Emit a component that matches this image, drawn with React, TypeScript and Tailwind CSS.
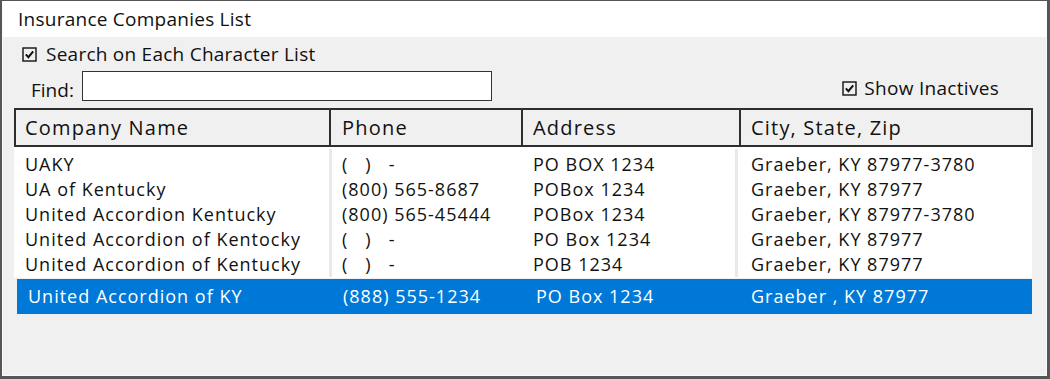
import React from 'react';

const rows = [
  ['UAKY', '(   )   -', 'PO BOX 1234', 'Graeber, KY 87977-3780'],
  ['UA of Kentucky', '(800) 565-8687', 'POBox 1234', 'Graeber, KY 87977'],
  ['United Accordion Kentucky', '(800) 565-45444', 'POBox 1234', 'Graeber, KY 87977-3780'],
  ['United Accordion of Kentocky', '(   )   -', 'PO Box 1234', 'Graeber, KY 87977'],
  ['United Accordion of Kentucky', '(   )   -', 'POB 1234', 'Graeber, KY 87977'],
];

function CheckBox() {
  return (
    <svg width="15" height="15" viewBox="0 0 15 15" className="shrink-0">
      <rect x="1" y="1" width="13" height="13" fill="none" stroke="#111" strokeWidth="1.4" />
      <path d="M3.8 7.4 L6.4 10.2 L11.2 4.3" fill="none" stroke="#111" strokeWidth="2" />
    </svg>
  );
}

export default function App() {
  return (
    <div
      className="w-[1050px] h-[379px] border-t border-l-2 border-r-[3px] border-b-[3px] border-[#565656] text-[#111]"
      style={{ fontFamily: '"Open Sans", "Noto Sans", sans-serif' }}
    >
      <div className="h-full flex flex-col border-l border-r border-b border-[#fafafa] bg-[#f0f0f0]">
        {/* title */}
        <div className="h-[36px] shrink-0 bg-white flex items-center pl-[15px] text-[19px] leading-[26px] tracking-[0.25px]">
          Insurance Companies List
        </div>

        <div className="flex flex-col pl-[11px] pr-[13px]">
          {/* search option */}
          <div className="mt-[4px] flex items-center pl-[8px] h-[26px] text-[19px] leading-[26px] tracking-[0.25px]">
            <CheckBox />
            <span className="ml-[9px]">Search on Each Character List</span>
          </div>

          {/* find row */}
          <div className="mt-[4px] flex items-start">
            <span className="mt-[6px] pl-[17px] text-[19px] leading-[26px]">Find:</span>
            <div className="ml-[8px] w-[410px] h-[30px] bg-white border border-[#333]" />
            <div className="ml-auto mr-[34px] mt-[4px] flex items-center h-[26px] text-[19px] leading-[26px] tracking-[0.3px]">
              <CheckBox />
              <span className="ml-[7px]">Show Inactives</span>
            </div>
          </div>

          {/* table header */}
          <div className="mt-[5px] h-[39px] border-2 border-[#2e2e2e] grid grid-cols-[315px_192px_218px_290px] text-[20px] tracking-[1.2px] leading-[26px]">
            <div className="border-r-2 border-[#2e2e2e] flex items-center pl-[9px]">Company Name</div>
            <div className="border-r-2 border-[#2e2e2e] flex items-center pl-[11px]">Phone</div>
            <div className="border-r-2 border-[#2e2e2e] flex items-center pl-[10px]">Address</div>
            <div className="flex items-center pl-[10px]">City, State, Zip</div>
          </div>

          {/* table body */}
          <div className="w-[1018px] bg-white pt-[2px] pb-[1px] grid grid-cols-[315px_194px_212px_297px] text-[18px] leading-[25px] tracking-[1px] whitespace-pre">
            <div className="pt-[3px] pl-[11px]">
              {rows.map((r, i) => (
                <div key={i} className="h-[25px]">{r[0]}</div>
              ))}
            </div>
            <div className="pt-[3px] pl-[10px] border-l-[3px] border-[#e9e9e9]">
              {rows.map((r, i) => (
                <div key={i} className="h-[25px]">{r[1]}</div>
              ))}
            </div>
            <div className="pt-[3px] pl-[10px]">
              {rows.map((r, i) => (
                <div key={i} className="h-[25px]">{r[2]}</div>
              ))}
            </div>
            <div className="pt-[3px] pl-[13px] border-l-[3px] border-[#e9e9e9]">
              {rows.map((r, i) => (
                <div key={i} className="h-[25px]">{r[3]}</div>
              ))}
            </div>
          </div>

          {/* selected row */}
          <div className="mt-[1px] ml-[3px] w-[1015px] h-[35px] bg-[#0078d7] text-white grid grid-cols-[314px_195px_215px_291px] items-center text-[18px] leading-[25px] tracking-[1px] whitespace-pre">
            <div className="pl-[11px]">United Accordion of KY</div>
            <div className="pl-[12px]">(888) 555-1234</div>
            <div className="pl-[10px]">PO Box 1234</div>
            <div className="pl-[10px]">Graeber , KY 87977</div>
          </div>
        </div>
      </div>
    </div>
  );
}
